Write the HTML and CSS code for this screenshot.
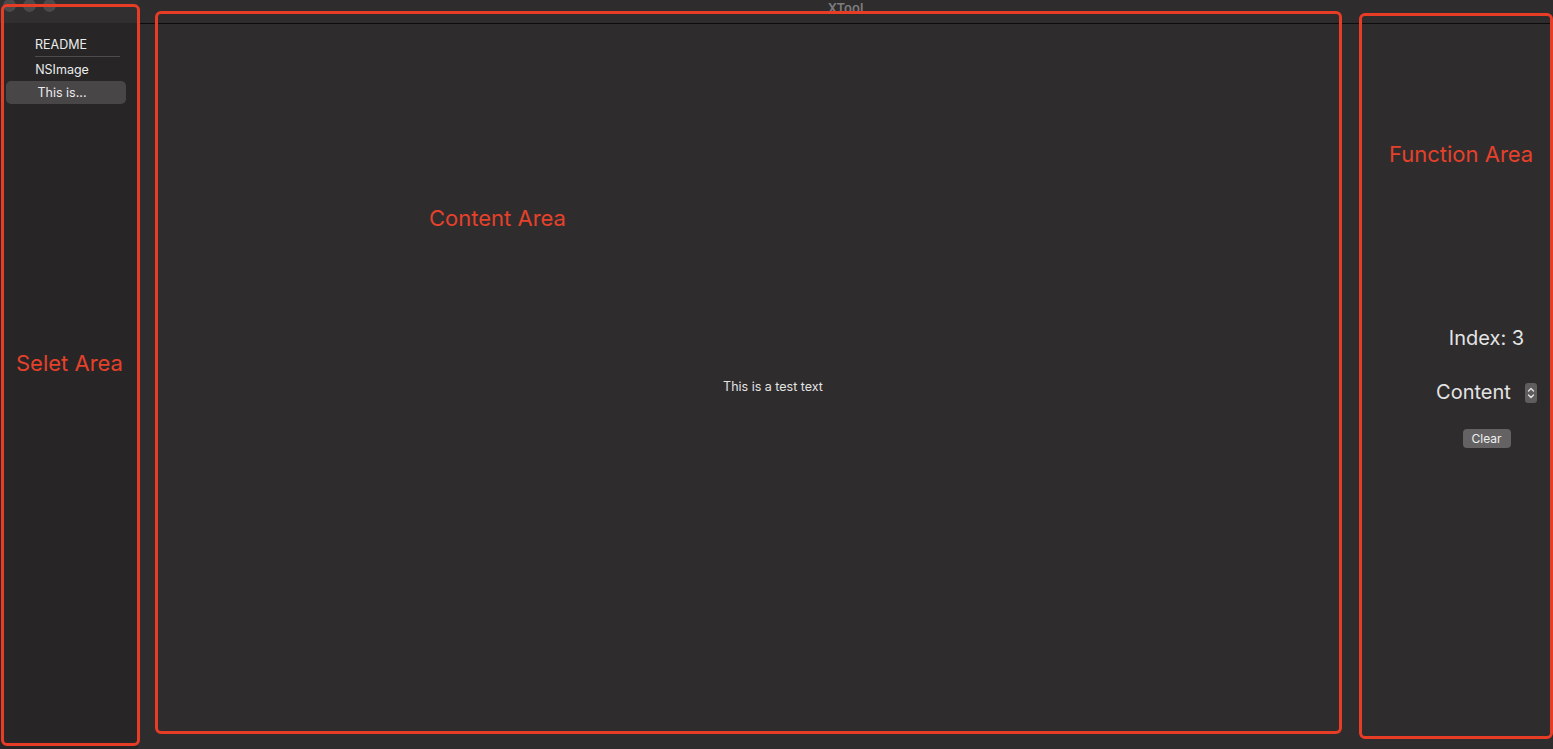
FILE: index.html
```html
<!DOCTYPE html>
<html>
<head>
<meta charset="utf-8">
<link rel="stylesheet" href="styles.css">
</head>
<body>
<div class="window">
  <aside class="sidebar">
    <div class="side-titlebar">
      <span class="light"></span><span class="light"></span><span class="light"></span>
    </div>
    <ul class="list">
      <li class="item first">README</li>
      <li class="item">NSImage</li>
      <li class="item selected">This is...</li>
    </ul>
  </aside>
  <div class="main">
    <div class="titlebar"><span class="title">XTool</span></div>
    <div class="panes">
      <section class="content-pane">This is a test text</section>
      <section class="function-pane">
        <div class="index">Index: 3</div>
        <div class="select-row">
          <span>Content</span>
          <span class="stepper">
            <svg width="12" height="20" viewBox="0 0 12 20"><rect x="0" y="0" width="12" height="20" rx="3" fill="#5f5d5e"/><path d="M3.5 8 L6 5.5 L8.5 8" stroke="#e8e8e8" stroke-width="1.3" fill="none" stroke-linecap="round" stroke-linejoin="round"/><path d="M3.5 12 L6 14.5 L8.5 12" stroke="#e8e8e8" stroke-width="1.3" fill="none" stroke-linecap="round" stroke-linejoin="round"/></svg>
          </span>
        </div>
        <button class="clear">Clear</button>
      </section>
    </div>
  </div>

  <div class="annot annot-select"></div>
  <div class="annot annot-content"></div>
  <div class="annot annot-function"></div>
  <span class="label label-select">Selet Area</span>
  <span class="label label-content">Content Area</span>
  <span class="label label-function">Function Area</span>
</div>
</body>
</html>
```

FILE: styles.css
```css
html, body {
  margin: 0;
  padding: 0;
  background: #2e2c2d;
  font-family: Inter, "Liberation Sans", sans-serif;
  overflow: hidden;
}

.window {
  position: relative;
  display: flex;
  width: 1553px;
  height: 749px;
  background: #2e2c2d;
}

.sidebar {
  width: 138px;
  flex: none;
  background: #272526;
  display: flex;
  flex-direction: column;
}

.side-titlebar {
  height: 23px;
  background: #312f30;
  display: flex;
  gap: 7px;
  padding-left: 3px;
  align-items: flex-start;
}

.light {
  width: 13px;
  height: 13px;
  border-radius: 50%;
  background: #4b494a;
  margin-top: -1px;
}

.list {
  list-style: none;
  margin: 10px 0 0 0;
  padding: 0 12px 0 6px;
  display: flex;
  flex-direction: column;
}

.item {
  height: 23px;
  line-height: 23px;
  font-size: 12.5px;
  color: #ececec;
  text-align: center;
  padding-right: 8px;
  border-radius: 5px;
}

.item.first {
  margin: 0 6px 1px 29px;
  padding-right: 0;
  text-align: left;
  border-bottom: 1px solid #4d4b4c;
  border-radius: 0;
}

.item.selected {
  background: #484647;
}

.main {
  flex: 1;
  display: flex;
  flex-direction: column;
}

.titlebar {
  height: 23px;
  border-bottom: 1px solid #0d0c0c;
  background: #2e2c2d;
  display: flex;
  justify-content: center;
  align-items: flex-start;
}

.title {
  font-size: 13px;
  font-weight: 600;
  color: #7e7c7d;
  line-height: 16px;
}

.panes {
  flex: 1;
  display: flex;
}

.content-pane {
  flex: 1;
  display: flex;
  align-items: center;
  justify-content: center;
  font-size: 12.5px;
  color: #e4e4e4;
}

.function-pane {
  width: 133px;
  padding-left: 12px;
  flex: none;
  display: flex;
  flex-direction: column;
  align-items: center;
  padding-top: 302px;
  color: #e4e4e4;
}

.index {
  font-size: 20px;
  line-height: 24px;
  height: 24px;
}

.select-row {
  margin-top: 30px;
  display: flex;
  align-items: center;
  gap: 14px;
  font-size: 20px;
  line-height: 24px;
  height: 24px;
}

.stepper {
  display: flex;
  padding-top: 1px;
}

.clear {
  margin-top: 25px;
  height: 19px;
  width: 48px;
  border: none;
  border-radius: 4px;
  background: #646263;
  color: #f0f0f0;
  font-family: Inter, "Liberation Sans", sans-serif;
  font-size: 12px;
  padding: 0;
}

.annot {
  position: absolute;
  border: 3px solid #e73c25;
  border-radius: 6px;
  box-sizing: border-box;
}

.annot-select { left: 1px; top: 4px; width: 139px; height: 742px; }
.annot-content { left: 155px; top: 11px; width: 1187px; height: 723px; }
.annot-function { left: 1359px; top: 13px; width: 194px; height: 726px; }

.label {
  position: absolute;
  color: #e5412b;
  font-size: 22px;
  line-height: 26px;
}

.label-select { left: 16px; top: 350px; }
.label-content { left: 429px; top: 205px; }
.label-function { left: 1389px; top: 141px; }
```
